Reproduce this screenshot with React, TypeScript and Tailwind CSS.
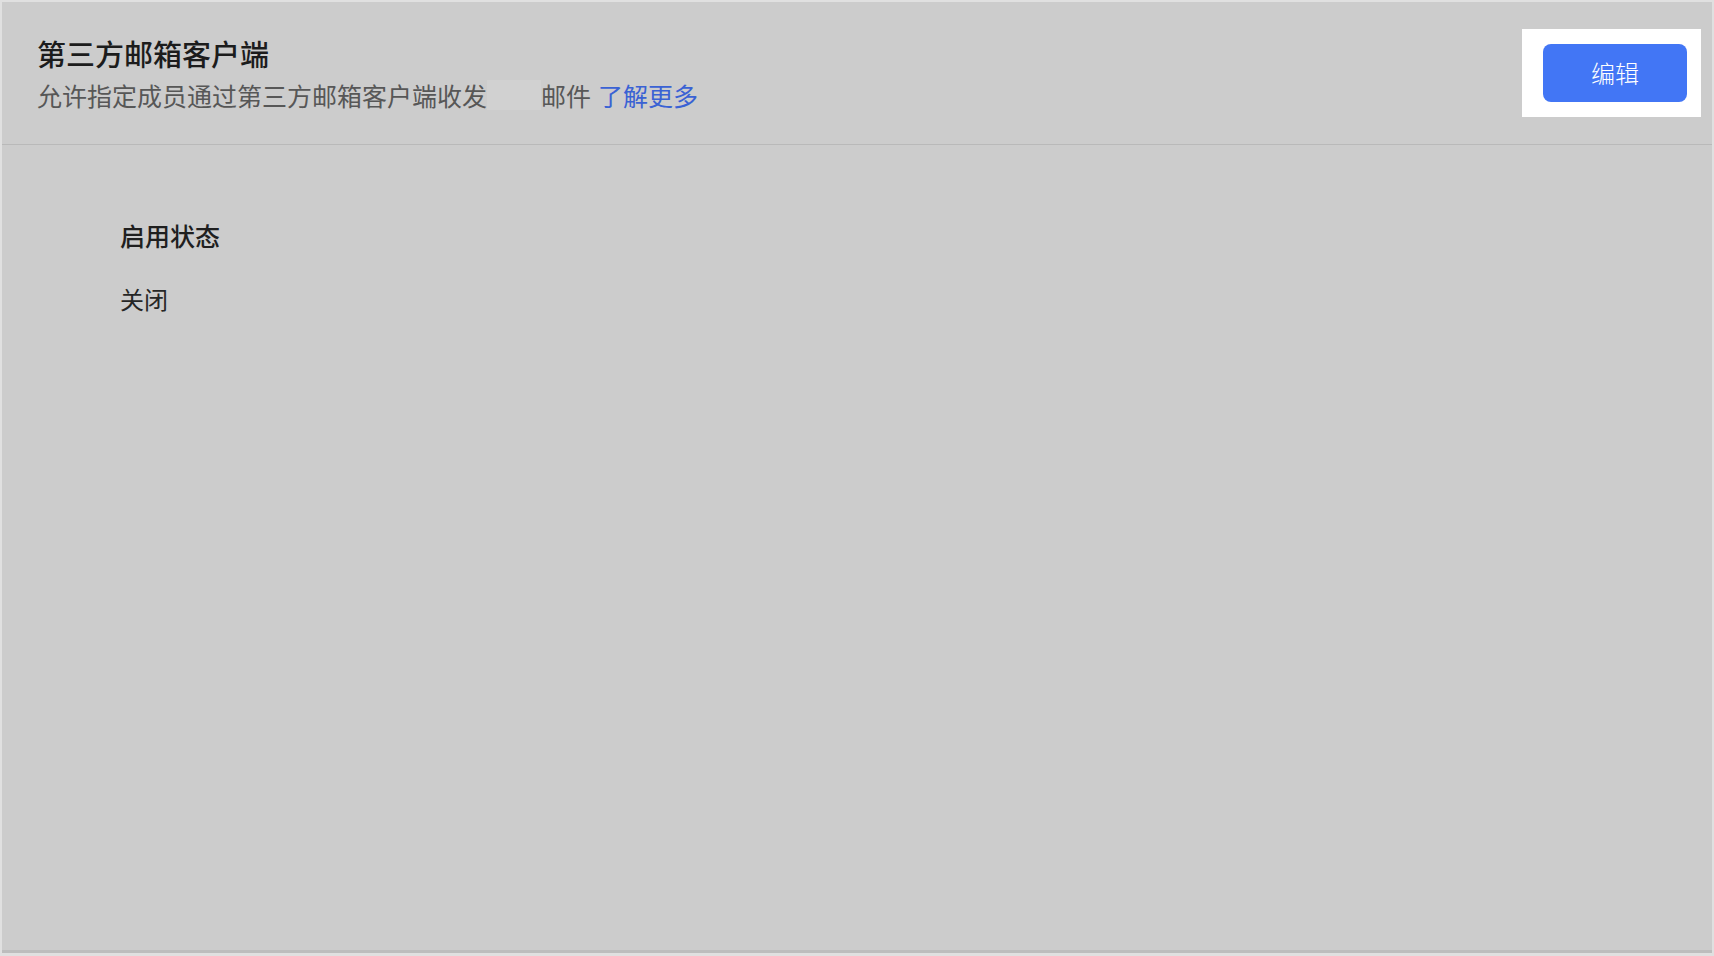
import React from 'react';

const font = { fontFamily: '"Noto Sans CJK SC", "Noto Sans", sans-serif' };

const Header: React.FC = () => (
  <div className="flex h-[143px] items-center justify-between border-b border-[#b9b9b9] pl-[35px] pr-[11px]">
    <div className="flex flex-col gap-[7px]">
      <h1 className="text-[29px] font-medium leading-[36px] text-[#1c1c1c]">第三方邮箱客户端</h1>
      <p className="flex items-center text-[25px] leading-[34px] text-[#575757]">
        <span>允许指定成员通过第三方邮箱客户端收发</span>
        <span className="inline-block h-[30px] w-[54px] bg-[#d1d1d1]" />
        <span>邮件</span>
        <a className="ml-[7px] cursor-pointer text-[#3a62d4]">了解更多</a>
      </p>
    </div>
    <div className="flex h-[88px] w-[179px] items-center bg-white pl-[21px]">
      <button className="h-[58px] w-[144px] rounded-[8px] bg-[#4276f5] text-[24px] font-light text-white">
        编辑
      </button>
    </div>
  </div>
);

export default function App() {
  return (
    <div className="h-[956px] w-full bg-[#e0e0e0] pb-[3px] pl-[2px] pr-[2px] pt-[2px]" style={font}>
      <div className="flex h-full flex-col border-b-[3px] border-[#bdbdbd] bg-[#cccccc]">
        <Header />
        <div className="flex flex-col gap-[30px] pl-[118px] pt-[73px]">
          <div className="text-[25px] font-medium leading-[34px] text-[#1f1f1f]">启用状态</div>
          <div className="text-[24px] leading-[34px] text-[#262626]">关闭</div>
        </div>
      </div>
    </div>
  );
}
